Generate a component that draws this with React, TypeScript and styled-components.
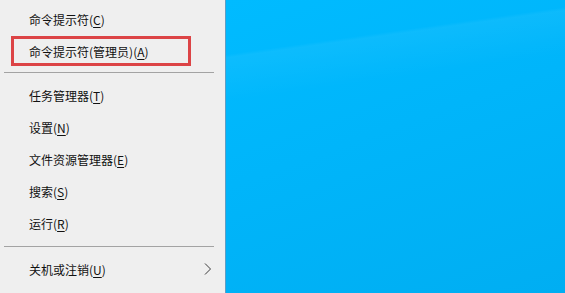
import React from "react";
import styled, { createGlobalStyle } from "styled-components";

const GlobalStyle = createGlobalStyle`
  html, body { margin: 0; padding: 0; width: 565px; height: 293px; overflow: hidden; }
  body { font-family: "Noto Sans CJK SC", "Noto Sans", sans-serif; }
`;

const Screen = styled.div`
  display: flex;
  width: 565px;
  height: 293px;
`;

const Menu = styled.div`
  width: 225px;
  height: 289px;
  background: #efefef;
  border-right: 1px solid #5e9ec4;
  padding-top: 4px;
  box-sizing: content-box;
  display: flex;
  flex-direction: column;
`;

const Desktop = styled.div`
  flex: 1;
  background:
    linear-gradient(172deg, rgba(255,255,255,0) 0%, rgba(255,255,255,0) 16%, rgba(255,255,255,0.05) 17%, rgba(255,255,255,0) 30%),
    linear-gradient(160deg, #00bbff 0%, #00b5fa 45%, #00aef2 100%);
`;

const Item = styled.div`
  position: relative;
  height: 32px;
  display: flex;
  align-items: center;
  padding-left: 29px;
  padding-right: 12px;
  font-size: 12px;
  color: #111;
  line-height: 1;
  white-space: nowrap;
`;

const Label = styled.span`
  flex: 1;
`;

const Key = styled.span`
  text-decoration: underline;
  text-underline-offset: 2px;
`;

const Separator = styled.div<{ $top: number; $bottom: number }>`
  height: 1px;
  margin: ${(p) => p.$top}px 11px ${(p) => p.$bottom}px 4px;
  background: #a3a3a3;
`;

const Highlight = styled.div`
  position: absolute;
  left: 11px;
  top: 0;
  width: 174px;
  height: 24px;
  border: 3px solid #dc4446;
  pointer-events: none;
`;

const Chevron = styled.svg`
  width: 8px;
  height: 12px;
  margin-right: 1px;
  margin-top: -3px;
`;

const Row: React.FC<{ text: string; accel: string; highlight?: boolean; submenu?: boolean }> = ({
  text,
  accel,
  highlight,
  submenu,
}) => (
  <Item>
    <Label>
      {text}(<Key>{accel}</Key>)
    </Label>
    {submenu && (
      <Chevron viewBox="0 0 8 12">
        <polyline points="1,0.5 6.5,6 1,11.5" fill="none" stroke="#3a3a3a" strokeWidth="1" />
      </Chevron>
    )}
    {highlight && <Highlight />}
  </Item>
);

export default function App() {
  return (
    <>
      <GlobalStyle />
      <Screen>
        <Menu>
          <Row text="命令提示符" accel="C" />
          <Row text="命令提示符(管理员)" accel="A" highlight />
          <Separator $top={4} $bottom={7} />
          <Row text="任务管理器" accel="T" />
          <Row text="设置" accel="N" />
          <Row text="文件资源管理器" accel="E" />
          <Row text="搜索" accel="S" />
          <Row text="运行" accel="R" />
          <Separator $top={6} $bottom={7} />
          <Row text="关机或注销" accel="U" submenu />
        </Menu>
        <Desktop />
      </Screen>
    </>
  );
}
